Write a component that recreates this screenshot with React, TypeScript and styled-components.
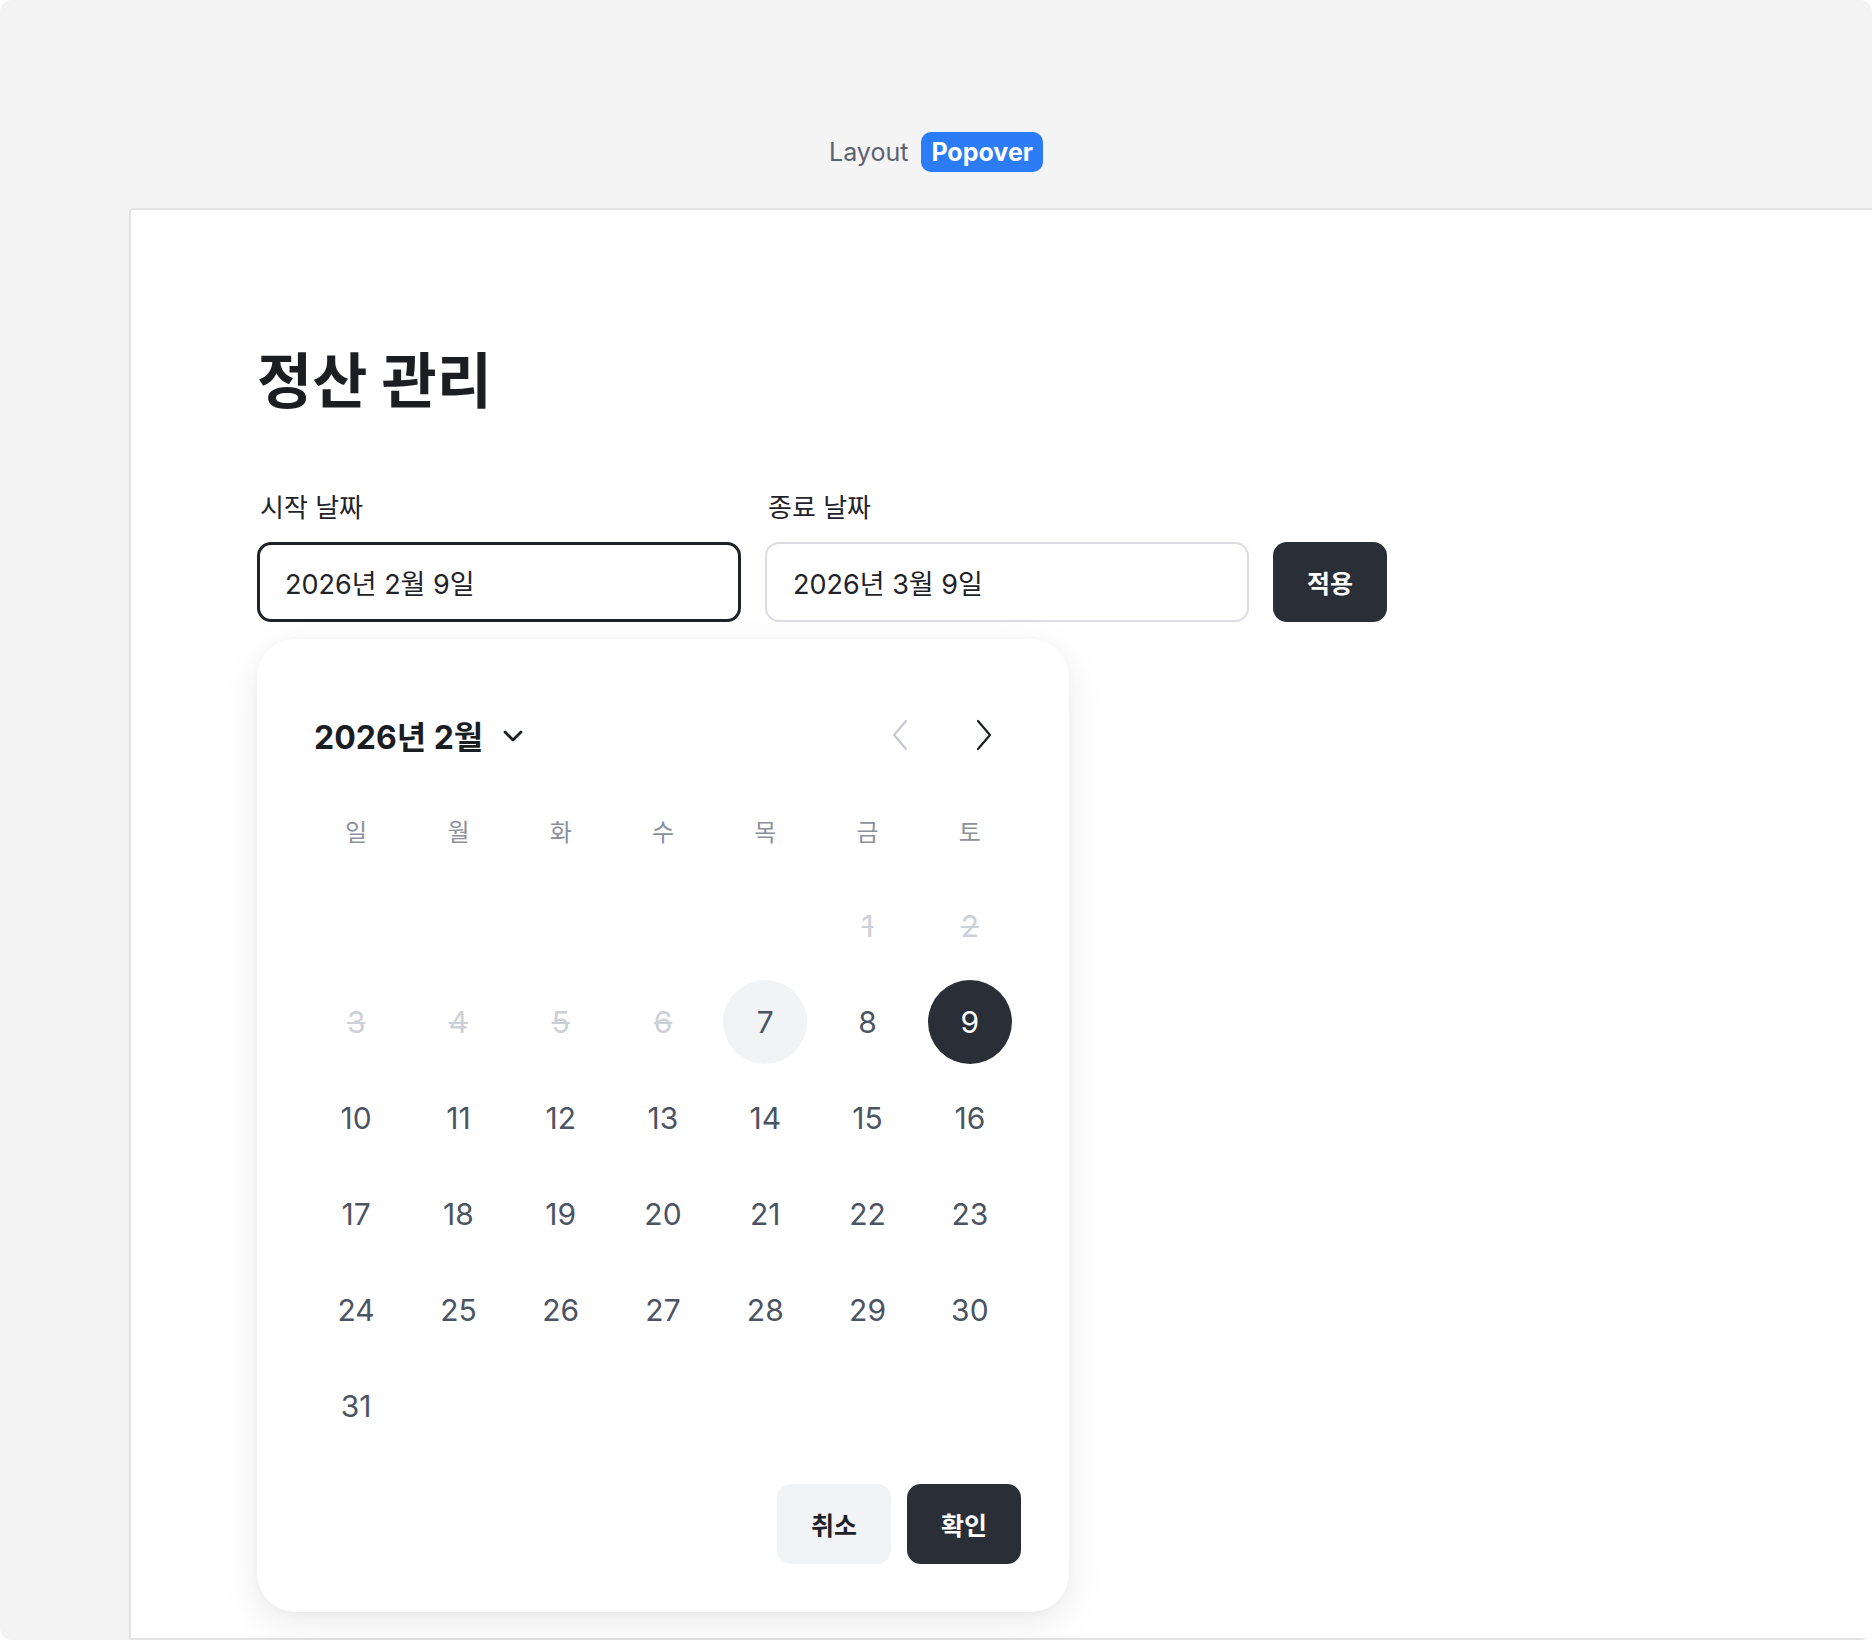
import React from "react";
import styled, { createGlobalStyle, css } from "styled-components";

const GlobalStyle = createGlobalStyle`
  html, body {
    margin: 0;
    padding: 0;
    background: #ffffff;
  }
  body {
    font-family: "Inter", "Noto Sans CJK KR", sans-serif;
    -webkit-font-smoothing: antialiased;
  }
  * {
    box-sizing: border-box;
  }
`;

type DayState = "default" | "disabled" | "today" | "selected";

type DayCell = {
  day: number | null;
  state?: DayState;
};

const weekdays = ["일", "월", "화", "수", "목", "금", "토"];

const buildDays = (): DayCell[] => {
  const cells: DayCell[] = [];
  for (let i = 0; i < 5; i++) cells.push({ day: null });
  for (let d = 1; d <= 31; d++) {
    let state: DayState = "default";
    if (d <= 6) state = "disabled";
    if (d === 7) state = "today";
    if (d === 9) state = "selected";
    cells.push({ day: d, state });
  }
  return cells;
};

const ChevronDown = () => (
  <svg width="20" height="12" viewBox="0 0 20 12" fill="none">
    <polyline
      points="2,2 10,10 18,2"
      stroke="#1a1d21"
      strokeWidth="2.8"
      strokeLinecap="round"
      strokeLinejoin="round"
    />
  </svg>
);

const ChevronSide = ({ dir, color }: { dir: "left" | "right"; color: string }) => (
  <svg width="18" height="32" viewBox="0 0 18 32" fill="none">
    <polyline
      points={dir === "left" ? "15,2 3,16 15,30" : "3,2 15,16 3,30"}
      stroke={color}
      strokeWidth="2.2"
      strokeLinecap="round"
      strokeLinejoin="round"
    />
  </svg>
);

const App = () => {
  const days = buildDays();

  return (
    <>
      <GlobalStyle />
      <Frame>
        <TopBar>
          <Crumb>Layout</Crumb>
          <Badge>Popover</Badge>
        </TopBar>
        <Card>
          <Title>정산 관리</Title>
          <FieldRow>
            <Field>
              <Label>시작 날짜</Label>
              <DateInput $active readOnly value="2026년 2월 9일" />
              <Popover>
                <CalHeader>
                  <MonthButton>
                    <span>2026년 2월</span>
                    <ChevronDown />
                  </MonthButton>
                  <NavGroup>
                    <NavButton aria-label="이전 달">
                      <ChevronSide dir="left" color="#c6c9cf" />
                    </NavButton>
                    <NavButton aria-label="다음 달">
                      <ChevronSide dir="right" color="#1a1d21" />
                    </NavButton>
                  </NavGroup>
                </CalHeader>
                <CalGrid>
                  {weekdays.map((w) => (
                    <Weekday key={w}>{w}</Weekday>
                  ))}
                  {days.map((c, i) => (
                    <Cell key={i}>
                      {c.day !== null && (
                        <DayCircle $state={c.state || "default"}>{c.day}</DayCircle>
                      )}
                    </Cell>
                  ))}
                </CalGrid>
                <PopFooter>
                  <FooterButton $variant="ghost">취소</FooterButton>
                  <FooterButton $variant="solid">확인</FooterButton>
                </PopFooter>
              </Popover>
            </Field>
            <Field>
              <Label>종료 날짜</Label>
              <DateInput readOnly value="2026년 3월 9일" />
            </Field>
            <ApplyButton>적용</ApplyButton>
          </FieldRow>
        </Card>
      </Frame>
    </>
  );
};

const Frame = styled.div`
  display: flex;
  flex-direction: column;
  height: 1640px;
  background: #f4f4f4;
  border-radius: 12px;
  overflow: hidden;
`;

const TopBar = styled.header`
  display: flex;
  align-items: flex-start;
  justify-content: center;
  gap: 13px;
  height: 208px;
  padding-top: 132px;
  flex-shrink: 0;
`;

const Crumb = styled.span`
  font-size: 25px;
  line-height: 40px;
  color: #5b6270;
`;

const Badge = styled.span`
  height: 40px;
  line-height: 40px;
  padding: 0 10px;
  border-radius: 10px;
  background: #2b7cf6;
  color: #ffffff;
  font-size: 25px;
  font-weight: 700;
`;

const Card = styled.main`
  flex: 1;
  margin-left: 129px;
  background: #ffffff;
  border: 2px solid #e3e3e3;
  border-right: none;
  border-top-left-radius: 4px;
  padding: 136px 0 0 126px;
`;

const Title = styled.h1`
  margin: 0 0 77px;
  font-size: 60px;
  line-height: 70px;
  font-weight: 700;
  letter-spacing: 0;
  color: #1c1e22;
`;

const FieldRow = styled.div`
  display: flex;
  align-items: flex-end;
  gap: 24px;
`;

const Field = styled.div`
  position: relative;
  display: flex;
  flex-direction: column;
`;

const Label = styled.label`
  font-size: 26px;
  line-height: 30px;
  font-weight: 400;
  color: #1f2329;
  margin-bottom: 19px;
  padding-left: 3px;
`;

const DateInput = styled.input<{ $active?: boolean }>`
  width: 484px;
  height: 80px;
  padding: 0 26px;
  border-radius: 14px;
  font-family: "Inter", "Noto Sans CJK KR", sans-serif;
  font-size: 27px;
  color: #1f2329;
  background: #ffffff;
  outline: none;
  border: 2px solid #dcdde3;

  ${(p) =>
    p.$active &&
    css`
      border: 3px solid #1f2227;
      padding: 0 25px;
    `}
`;

const ApplyButton = styled.button`
  width: 114px;
  height: 80px;
  border: none;
  border-radius: 14px;
  background: #2a2f37;
  color: #ffffff;
  font-family: "Inter", "Noto Sans CJK KR", sans-serif;
  font-size: 25px;
  font-weight: 700;
`;

const Popover = styled.div`
  position: absolute;
  top: calc(100% + 17px);
  left: 0;
  width: 812px;
  padding: 48px;
  border-radius: 38px;
  background: #ffffff;
  box-shadow: 0 12px 40px rgba(0, 0, 0, 0.08), 0 2px 10px rgba(0, 0, 0, 0.03);
  z-index: 10;
`;

const CalHeader = styled.div`
  display: flex;
  align-items: center;
  justify-content: space-between;
  height: 96px;
  margin-bottom: 5px;
  padding: 0 18px 0 9px;
`;

const MonthButton = styled.div`
  display: flex;
  align-items: center;
  gap: 20px;
  font-size: 32px;
  font-weight: 700;
  color: #1a1d21;

  svg {
    margin-top: 2px;
  }
`;

const NavGroup = styled.div`
  display: flex;
  align-items: center;
  gap: 46px;
`;

const NavButton = styled.button`
  display: flex;
  align-items: center;
  justify-content: center;
  width: 38px;
  height: 48px;
  padding: 0;
  border: none;
  background: transparent;
`;

const CalGrid = styled.div`
  display: grid;
  grid-template-columns: repeat(7, 1fr);
  grid-auto-rows: 84px;
  row-gap: 12px;
`;

const Weekday = styled.div`
  display: flex;
  align-items: center;
  justify-content: center;
  font-size: 24px;
  color: #8b909a;
`;

const Cell = styled.div`
  display: flex;
  align-items: center;
  justify-content: center;
`;

const dayStyles: Record<DayState, ReturnType<typeof css>> = {
  default: css`
    color: #4b5463;
  `,
  disabled: css`
    color: #cdd0d6;
    text-decoration: line-through;
    text-decoration-thickness: 2px;
  `,
  today: css`
    color: #4b5463;
    background: #f2f3f5;
  `,
  selected: css`
    color: #ffffff;
    background: #2a2f37;
  `,
};

const DayCircle = styled.div<{ $state: DayState }>`
  display: flex;
  align-items: center;
  justify-content: center;
  width: 84px;
  height: 84px;
  border-radius: 50%;
  font-size: 30px;
  ${(p) => dayStyles[p.$state]}
`;

const PopFooter = styled.div`
  display: flex;
  justify-content: flex-end;
  gap: 16px;
  margin-top: 36px;
`;

const FooterButton = styled.button<{ $variant: "ghost" | "solid" }>`
  width: 114px;
  height: 80px;
  border: none;
  border-radius: 14px;
  font-family: "Inter", "Noto Sans CJK KR", sans-serif;
  font-size: 25px;
  font-weight: 700;
  background: ${(p) => (p.$variant === "solid" ? "#2a2f37" : "#f2f3f5")};
  color: ${(p) => (p.$variant === "solid" ? "#ffffff" : "#1f2227")};
`;

export default App;
